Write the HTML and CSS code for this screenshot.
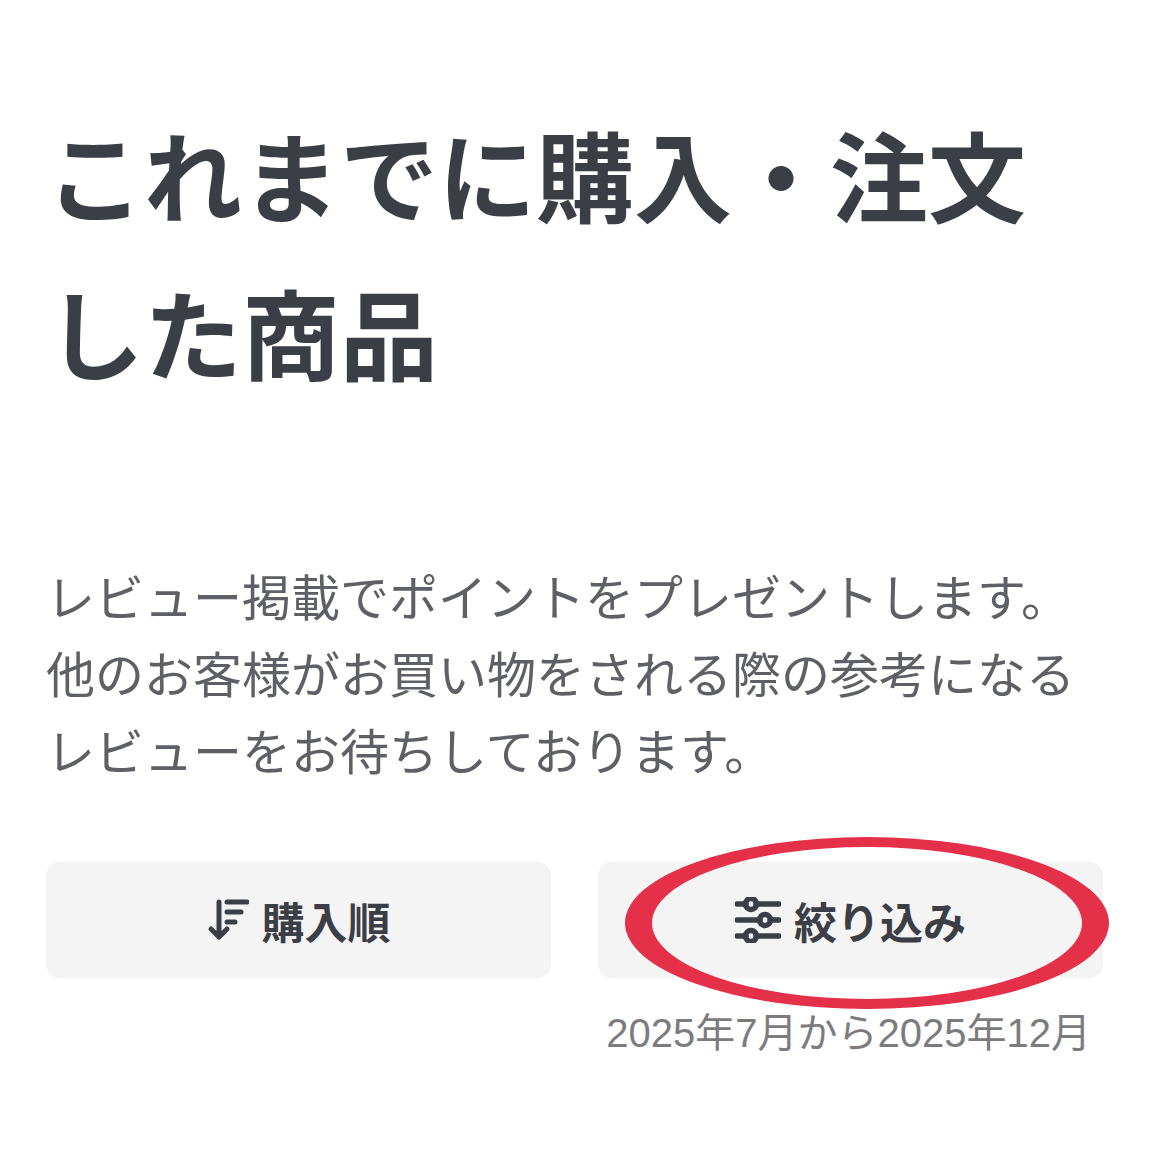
FILE: index.html
```html
<!DOCTYPE html>
<html lang="ja">

<head>
  <meta charset="UTF-8">
  <meta name="viewport" content="width=device-width, initial-scale=1.0">
  <title>これまでに購入・注文した商品</title>
  <link rel="stylesheet" href="styles.css">
</head>

<body>
  <div class="container">
    <h1>これまでに購入・注文した商品</h1>

    <p class="lead">レビュー掲載でポイントをプレゼントします。<br>他のお客様がお買い物をされる際の参考になる<br>レビューをお待ちしております。</p>

    <div class="actions">
      <div class="action">
        <button class="action-btn" type="button">
          <svg class="icon-sort" viewBox="0 0 42 42" aria-hidden="true">
            <path d="M12 3v35M4 30l8 8 8-8" />
            <path d="M20 3h20M20 13h14M20 23h8" />
          </svg>
          購入順
        </button>
      </div>

      <div class="action">
        <button class="action-btn" type="button">
          <svg class="icon-filter" viewBox="0 0 46 46" aria-hidden="true">
            <path d="M2 7h9M21 7h23M2 23h23M35 23h9M2 39h9M21 39h23" />
            <circle cx="16" cy="7" r="5.5" />
            <circle cx="30" cy="23" r="5.5" />
            <circle cx="16" cy="39" r="5.5" />
          </svg>
          絞り込み
        </button>
        <!-- 赤い丸の注釈 -->
        <svg class="marker" viewBox="0 0 484 172" aria-hidden="true">
          <path fill-rule="evenodd" d="M0 86A242 86 0 0 1 484 86A242 86 0 0 1 0 86ZM27 86A215 76 0 0 0 457 86A215 76 0 0 0 27 86Z" />
        </svg>
        <div class="period">2025年7月から2025年12月</div>
      </div>
    </div>
  </div>
</body>

</html>
```

FILE: styles.css
```css
* {
  margin: 0;
  padding: 0;
  box-sizing: border-box;
}

body {
  font-family: "Noto Sans CJK JP", "Noto Sans", sans-serif;
  background: #fff;
  color: #3c3e46;
}

.container {
  padding: 93px 47px 0 46px;
}

h1 {
  font-size: 98px;
  line-height: 158px;
  font-weight: 700;
  margin-bottom: 147px;
}

.lead {
  font-size: 49px;
  line-height: 77px;
  color: #5e6066;
  margin-bottom: 75px;
}

.actions {
  display: grid;
  grid-template-columns: 1fr 1fr;
  gap: 47px;
}

.action {
  position: relative;
}

.action-btn {
  display: flex;
  justify-content: center;
  align-items: center;
  gap: 13px;
  width: 100%;
  height: 116px;
  font-family: inherit;
  font-size: 43px;
  font-weight: 700;
  color: #3c3e46;
  background: #f4f4f5;
  border: none;
  border-radius: 14px;
}

.icon-sort {
  width: 42px;
  height: 42px;
  fill: none;
  stroke: currentColor;
  stroke-width: 5;
  stroke-linecap: round;
  stroke-linejoin: round;
}

.icon-filter {
  width: 46px;
  height: 46px;
  fill: none;
  stroke: currentColor;
  stroke-width: 5.5;
  stroke-linecap: round;
}

.marker {
  position: absolute;
  left: 27px;
  top: -25px;
  width: 484px;
  height: 172px;
  fill: #e5304a;
}

.period {
  font-family: "Liberation Sans", "Noto Sans CJK JP", sans-serif;
  font-size: 40px;
  line-height: 50px;
  color: #7c7c7e;
  text-align: right;
  padding-right: 12px;
  margin-top: 30px;
}
```
